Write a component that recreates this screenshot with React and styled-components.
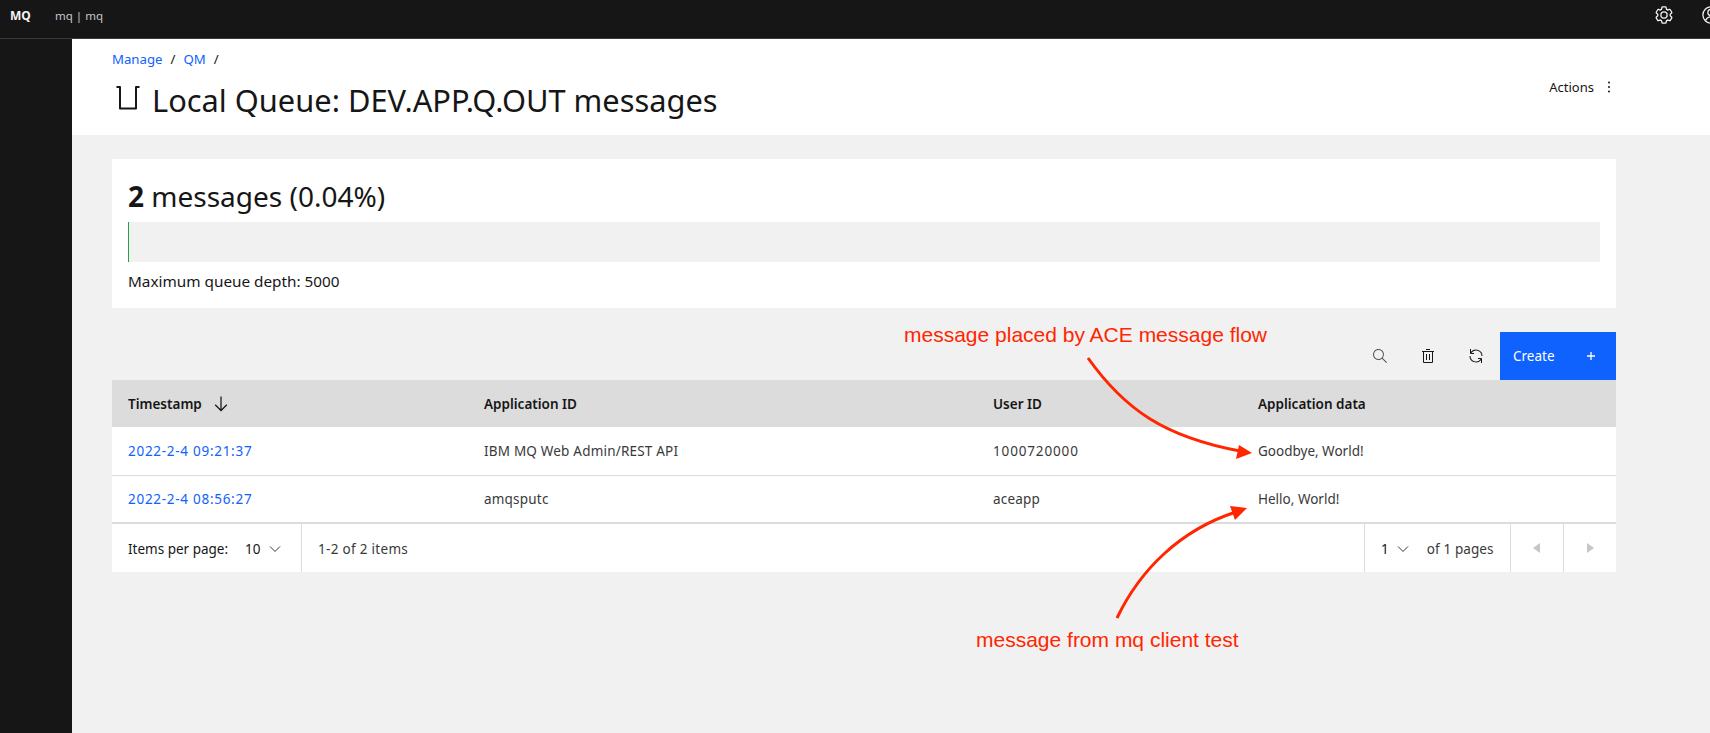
import React from "react";
import styled, { createGlobalStyle } from "styled-components";

const GlobalStyle = createGlobalStyle`
  html, body {
    margin: 0;
    padding: 0;
    background: #f1f1f1;
  }
  * {
    box-sizing: border-box;
  }
`;

const FONT = `"Noto Sans", "Liberation Sans", sans-serif`;

const Page = styled.div`
  position: relative;
  width: 1710px;
  height: 733px;
  overflow: hidden;
  font-family: ${FONT};
  color: #161616;
  display: flex;
  flex-direction: column;
`;

const TopBar = styled.header`
  flex: 0 0 39px;
  display: flex;
  align-items: center;
  background: #161616;
  border-bottom: 1px solid #393939;
  padding-left: 10px;
  color: #f4f4f4;
`;

const Brand = styled.span`
  font-size: 12px;
  font-weight: 700;
  width: 45px;
  margin-top: -8px;
`;

const Instance = styled.span`
  font-size: 11.5px;
  color: #c6c6c6;
  margin-top: -8px;
`;

const TopIcons = styled.div`
  margin-left: auto;
  display: flex;
  align-items: center;
  gap: 27px;
  margin-right: -11px;
  margin-top: -8px;
`;

const Body = styled.div`
  flex: 1;
  display: flex;
  min-height: 0;
`;

const SideNav = styled.nav`
  flex: 0 0 72px;
  background: #161616;
`;

const Main = styled.main`
  flex: 1;
  min-width: 0;
`;

const PageHeader = styled.section`
  height: 96px;
  background: #fff;
  padding: 11px 93px 0 40px;
  display: flex;
  justify-content: space-between;
`;

const Breadcrumb = styled.div`
  display: flex;
  gap: 8px;
  font-size: 13.2px;
  line-height: 18px;
`;

const Crumb = styled.a`
  color: #0f62fe;
`;

const Title = styled.h1`
  margin: 12px 0 0 4px;
  display: flex;
  align-items: center;
  gap: 12px;
  font-size: 30.8px;
  line-height: 40px;
  font-weight: 400;
`;

const Actions = styled.div`
  display: flex;
  align-items: center;
  gap: 7px;
  height: 18px;
  margin-top: 28px;
  font-size: 13px;
`;

const Content = styled.div`
  padding: 24px 94px 0 40px;
`;

const DepthCard = styled.section`
  height: 149px;
  background: #fff;
  padding: 16px 16px 0;
`;

const DepthTitle = styled.div`
  font-size: 28px;
  line-height: 42px;
  b {
    font-weight: 700;
  }
`;

const DepthBar = styled.div`
  height: 40px;
  margin-top: 5px;
  background: #f1f1f1;
`;

const DepthFill = styled.div`
  height: 100%;
  background: #24a148;
`;

const DepthNote = styled.div`
  margin-top: 9px;
  font-size: 15.3px;
  line-height: 20px;
`;

const Toolbar = styled.div`
  height: 48px;
  margin-top: 24px;
  display: flex;
  justify-content: flex-end;
`;

const ToolButton = styled.button`
  width: 48px;
  height: 48px;
  border: 0;
  padding: 0;
  background: transparent;
  color: ${(p) => p.$color || "#161616"};
  display: flex;
  align-items: center;
  justify-content: center;
`;

const CreateButton = styled.button`
  width: 116px;
  height: 48px;
  border: 0;
  background: #0f62fe;
  color: #fff;
  padding: 0 20px 0 13px;
  display: flex;
  align-items: center;
  justify-content: space-between;
  font-family: ${FONT};
  font-size: 13.5px;
`;

const Table = styled.div`
  font-size: 13.5px;
`;

const Row = styled.div`
  display: grid;
  grid-template-columns: 356px 509px 265px 1fr;
  align-items: center;
  height: ${(p) => p.$height}px;
  padding-left: 16px;
  background: ${(p) => (p.$head ? "#dcdcdc" : "#fff")};
  font-weight: ${(p) => (p.$head ? 600 : 400)};
  color: ${(p) => (p.$head ? "#161616" : "#393939")};
  border-bottom: ${(p) => p.$border || "0"};
`;

const SortCell = styled.span`
  display: flex;
  align-items: center;
  gap: 9px;
`;

const RowLink = styled.a`
  color: #0f62fe;
  letter-spacing: 0.72px;
`;

const TextCell = styled.span`
  letter-spacing: 0.2px;
`;

const NumberCell = styled.span`
  letter-spacing: 0.85px;
`;

const Pager = styled.div`
  height: 48px;
  background: #fff;
  display: flex;
  font-size: 13.5px;
  color: #393939;
`;

const PagerCell = styled.div`
  display: flex;
  align-items: center;
  height: 100%;
  width: ${(p) => (p.$width ? `${p.$width}px` : "auto")};
  flex: ${(p) => (p.$grow ? 1 : "none")};
  padding: ${(p) => p.$pad || "1px 16px 0"};
  justify-content: ${(p) => (p.$center ? "center" : "flex-start")};
  border-left: ${(p) => (p.$divided ? "1px solid #dcdcdc" : "0")};
  white-space: nowrap;
  letter-spacing: ${(p) => p.$spacing ?? 0.1}px;
`;

const Strong = styled.span`
  color: #161616;
  margin-right: ${(p) => p.$gap || 0}px;
`;

const ChevronSlot = styled.span`
  display: flex;
  margin-left: ${(p) => p.$left}px;
  margin-right: ${(p) => p.$right || 0}px;
`;

const Note = styled.span`
  position: absolute;
  left: ${(p) => p.$x}px;
  top: ${(p) => p.$y}px;
  font-family: "Liberation Sans", Arial, sans-serif;
  font-size: 21px;
  line-height: 24px;
  color: #ff2600;
  white-space: nowrap;
`;

const Arrows = styled.svg`
  position: absolute;
  left: 0;
  top: 0;
  pointer-events: none;
`;

const Glyph = ({ size = 16, children }) => (
  <svg width={size} height={size} viewBox="0 0 32 32" fill="currentColor">
    {children}
  </svg>
);

const Gear = () => (
  <Glyph size={20}>
    <path d="M27,16.76c0-.25,0-.5,0-.76s0-.51,0-.77l1.92-1.68A2,2,0,0,0,29.3,11L26.94,7a2,2,0,0,0-1.73-1,2,2,0,0,0-.64.1l-2.43.82a11.35,11.35,0,0,0-1.31-.75l-.51-2.52a2,2,0,0,0-2-1.61H13.64a2,2,0,0,0-2,1.61l-.51,2.52a11.48,11.48,0,0,0-1.32.75L7.43,6.06A2,2,0,0,0,6.79,6,2,2,0,0,0,5.06,7L2.7,11a2,2,0,0,0,.41,2.51L5,15.24c0,.25,0,.5,0,.76s0,.51,0,.77L3.11,18.45A2,2,0,0,0,2.7,21L5.06,25a2,2,0,0,0,1.73,1,2,2,0,0,0,.64-.1l2.43-.82a11.35,11.35,0,0,0,1.31.75l.51,2.52a2,2,0,0,0,2,1.61h4.72a2,2,0,0,0,2-1.61l.51-2.52a11.48,11.48,0,0,0,1.32-.75l2.42.82a2,2,0,0,0,.64.1,2,2,0,0,0,1.73-1L29.3,21a2,2,0,0,0-.41-2.51ZM25.21,24l-3.43-1.16a8.86,8.86,0,0,1-2.71,1.57L18.36,28H13.64l-.71-3.55a9.36,9.36,0,0,1-2.7-1.57L6.79,24,4.43,20l2.72-2.4a8.9,8.9,0,0,1,0-3.13L4.43,12,6.79,8l3.43,1.16a8.86,8.86,0,0,1,2.71-1.57L13.64,4h4.72l.71,3.55a9.36,9.36,0,0,1,2.7,1.57L25.21,8,27.57,12l-2.72,2.4a8.9,8.9,0,0,1,0,3.13L27.57,20Z" />
    <path d="M16,22a6,6,0,1,1,6-6A5.94,5.94,0,0,1,16,22Zm0-10a3.91,3.91,0,0,0-4,4,3.91,3.91,0,0,0,4,4,3.91,3.91,0,0,0,4-4A3.91,3.91,0,0,0,16,12Z" />
  </Glyph>
);

const Avatar = () => (
  <svg width="20" height="20" viewBox="0 0 32 32" fill="none" stroke="currentColor" strokeWidth="2">
    <circle cx="16" cy="16" r="13" />
    <circle cx="16" cy="12" r="5" />
    <path d="M7 25c2-4 5-6 9-6s7 2 9 6" />
  </svg>
);

const QueueIcon = () => (
  <svg width="24" height="28" viewBox="0 0 24 28" fill="none" stroke="#161616" strokeWidth="2" strokeLinejoin="round">
    <path d="M0.5 1H4V22.5H20V1H23.5" />
  </svg>
);

const Kebab = () => (
  <svg width="16" height="16" viewBox="0 0 16 16" fill="#161616">
    <circle cx="8" cy="3.5" r="1" />
    <circle cx="8" cy="8" r="1" />
    <circle cx="8" cy="12.5" r="1" />
  </svg>
);

const Chevron = () => (
  <svg width="16" height="16" viewBox="0 0 16 16" fill="none" stroke="#393939">
    <path d="M3 5.5 8 10.5l5-5" />
  </svg>
);

const Caret = ({ dir }) => (
  <svg width="16" height="16" viewBox="0 0 16 16" fill="#c6c6c6">
    <path d={dir === "left" ? "M11 3v10L4 8z" : "M5 3v10l7-5z"} />
  </svg>
);

const App = () => (
  <Page>
    <GlobalStyle />
    <TopBar>
      <Brand>MQ</Brand>
      <Instance>mq | mq</Instance>
      <TopIcons>
        <Gear />
        <Avatar />
      </TopIcons>
    </TopBar>
    <Body>
      <SideNav />
      <Main>
        <PageHeader>
          <div>
            <Breadcrumb>
              <Crumb>Manage</Crumb>
              <span>/</span>
              <Crumb>QM</Crumb>
              <span>/</span>
            </Breadcrumb>
            <Title>
              <QueueIcon />
              Local Queue: DEV.APP.Q.OUT messages
            </Title>
          </div>
          <Actions>
            Actions
            <Kebab />
          </Actions>
        </PageHeader>
        <Content>
          <DepthCard>
            <DepthTitle>
              <b>2</b> messages (0.04%)
            </DepthTitle>
            <DepthBar>
              <DepthFill style={{ width: `${(2 / 5000) * 100}%` }} />
            </DepthBar>
            <DepthNote>Maximum queue depth: 5000</DepthNote>
          </DepthCard>
          <Toolbar>
            <ToolButton $color="#525252">
              <Glyph>
                <path transform="scale(2)" d="M15,14.3L10.7,10c1.9-2.3,1.6-5.8-0.7-7.7S4.2,0.7,2.3,3S0.7,8.8,3,10.7c2,1.7,5,1.7,7,0l4.3,4.3L15,14.3z M2,6.5 C2,4,4,2,6.5,2S11,4,11,6.5S9,11,6.5,11S2,9,2,6.5z" />
              </Glyph>
            </ToolButton>
            <ToolButton>
              <Glyph>
                <path d="M12 12H14V24H12zM18 12H20V24H18z" />
                <path d="M4 6V8H6V28a2 2 0 002 2H24a2 2 0 002-2V8h2V6zM8 28V8H24V28zM12 2H20V4H12z" />
              </Glyph>
            </ToolButton>
            <ToolButton>
              <Glyph>
                <path d="M12 10H6.78A11 11 0 0127 16h2A13 13 0 006 7.68V2H4v8a2 2 0 002 2h6zM20 22h5.22A11 11 0 015 16H3a13 13 0 0023 8.32V30h2V22a2 2 0 00-2-2H20z" />
              </Glyph>
            </ToolButton>
            <CreateButton>
              Create
              <svg width="10" height="10" viewBox="0 0 10 10" fill="none" stroke="#fff" strokeWidth="1.3">
                <path d="M5 1v8M1 5h8" />
              </svg>
            </CreateButton>
          </Toolbar>
          <Table>
            <Row $head $height={47}>
              <SortCell>
                Timestamp
                <svg width="20" height="20" viewBox="0 0 32 32" fill="#161616">
                  <path d="M24.59 16.59 17 24.17V4h-2v20.17l-7.59-7.58L6 18l10 10 10-10z" />
                </svg>
              </SortCell>
              <span>Application ID</span>
              <span>User ID</span>
              <span>Application data</span>
            </Row>
            <Row $height={49} $border="1px solid #dcdcdc">
              <RowLink>2022-2-4 09:21:37</RowLink>
              <TextCell>IBM MQ Web Admin/REST API</TextCell>
              <NumberCell>1000720000</NumberCell>
              <span>Goodbye, World!</span>
            </Row>
            <Row $height={48} $border="2px solid #dcdcdc">
              <RowLink>2022-2-4 08:56:27</RowLink>
              <TextCell>amqsputc</TextCell>
              <TextCell>aceapp</TextCell>
              <span>Hello, World!</span>
            </Row>
          </Table>
          <Pager>
            <PagerCell $width={189} $spacing={0}>
              <Strong $gap={17}>Items per page:</Strong>
              <Strong>10</Strong>
              <ChevronSlot $left={6}>
                <Chevron />
              </ChevronSlot>
            </PagerCell>
            <PagerCell $grow $divided $spacing={0.3}>
              1-2 of 2 items
            </PagerCell>
            <PagerCell $width={146} $divided>
              <Strong>1</Strong>
              <ChevronSlot $left={6} $right={16}>
                <Chevron />
              </ChevronSlot>
              of 1 pages
            </PagerCell>
            <PagerCell $width={53} $divided $center $pad="0">
              <Caret dir="left" />
            </PagerCell>
            <PagerCell $width={53} $divided $center $pad="0">
              <Caret dir="right" />
            </PagerCell>
          </Pager>
        </Content>
      </Main>
    </Body>
    <Note $x={904} $y={323}>message placed by ACE message flow</Note>
    <Note $x={976} $y={628}>message from mq client test</Note>
    <Arrows width="1710" height="733" viewBox="0 0 1710 733" fill="none">
      <path d="M1088 358C1125 410 1165 437 1240 451" stroke="#ff2600" strokeWidth="3" />
      <path d="M1252 453L1236 459 1239 445z" fill="#ff2600" />
      <path d="M1117 618C1140 570 1180 530 1236 512" stroke="#ff2600" strokeWidth="3" />
      <path d="M1247 508L1235 520 1230 506z" fill="#ff2600" />
    </Arrows>
  </Page>
);

export default App;
